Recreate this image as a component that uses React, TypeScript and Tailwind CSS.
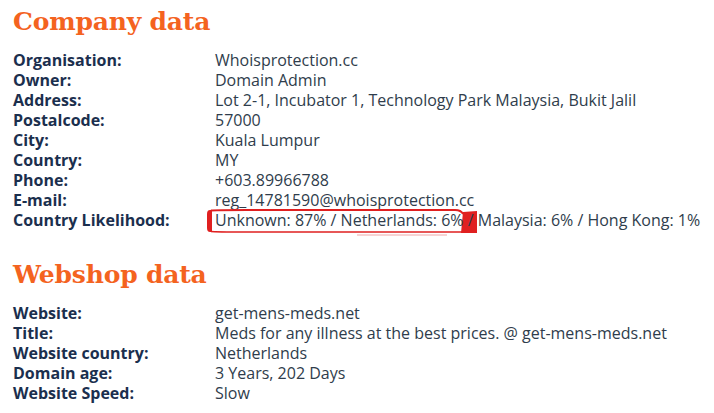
const company: [string, string][] = [
  ["Organisation:", "Whoisprotection.cc"],
  ["Owner:", "Domain Admin"],
  ["Address:", "Lot 2-1, Incubator 1, Technology Park Malaysia, Bukit Jalil"],
  ["Postalcode:", "57000"],
  ["City:", "Kuala Lumpur"],
  ["Country:", "MY"],
  ["Phone:", "+603.89966788"],
  ["E-mail:", "reg_14781590@whoisprotection.cc"],
]

const webshop: [string, string][] = [
  ["Website:", "get-mens-meds.net"],
  ["Title:", "Meds for any illness at the best prices. @ get-mens-meds.net"],
  ["Website country:", "Netherlands"],
  ["Domain age:", "3 Years, 202 Days"],
  ["Website Speed:", "Slow"],
]

function Row({ label, value, children }: { label: string; value?: string; children?: React.ReactNode }) {
  return (
    <div className="flex h-5 items-center leading-5">
      <div className="w-[202px] shrink-0 font-bold text-[#1b2f4e]">{label}</div>
      <div className="relative whitespace-nowrap text-[#2f3d4c]">{children ?? value}</div>
    </div>
  )
}

function Heading({ children }: { children: React.ReactNode }) {
  return (
    <h2 className="text-[25px] font-bold leading-8 text-[#f4631f] tracking-[-0.2px]" style={{ fontFamily: '"DejaVu Serif", serif' }}>
      {children}
    </h2>
  )
}

export default function App() {
  return (
    <div className="min-h-screen bg-white px-[13px] pt-[6px] text-[16px]" style={{ fontFamily: '"Open Sans", sans-serif' }}>
      <Heading>Company data</Heading>
      <div className="mt-[12px]">
        {company.map(([l, v]) => (
          <Row key={l} label={l} value={v} />
        ))}
        <Row label="Country Likelihood:">
          {/* red marker annotation over the first two values */}
          <svg className="pointer-events-none absolute left-[-8px] top-[-1px]" width="280" height="30" viewBox="0 0 280 30">
            <path d="M3 1 Q0 1 0 5 V19 Q0 23 3 23 H5 V1 Z" fill="#e02020" />
            <path d="M4 1.5 Q7 1 40 1 L248 1 Q254 1 256 5" stroke="#e02020" strokeWidth="1.8" fill="none" />
            <path d="M4 22.5 Q8 23 40 23 L260 23" stroke="#e02020" strokeWidth="1.6" fill="none" />
            <path d="M150 26 L240 26" stroke="#eea8a8" strokeWidth="1" fill="none" />
            <path d="M256 3 L270 2 L270 24 L254 24 Z" fill="#e02020" />
          </svg>
          <span className="relative">Unknown: 87% / Netherlands: 6% / Malaysia: 6% / Hong Kong: 1%</span>
        </Row>
      </div>
      <div className="mt-[29px]">
        <Heading>Webshop data</Heading>
      </div>
      <div className="mt-[12px]">
        {webshop.map(([l, v]) => (
          <Row key={l} label={l} value={v} />
        ))}
      </div>
    </div>
  )
}
